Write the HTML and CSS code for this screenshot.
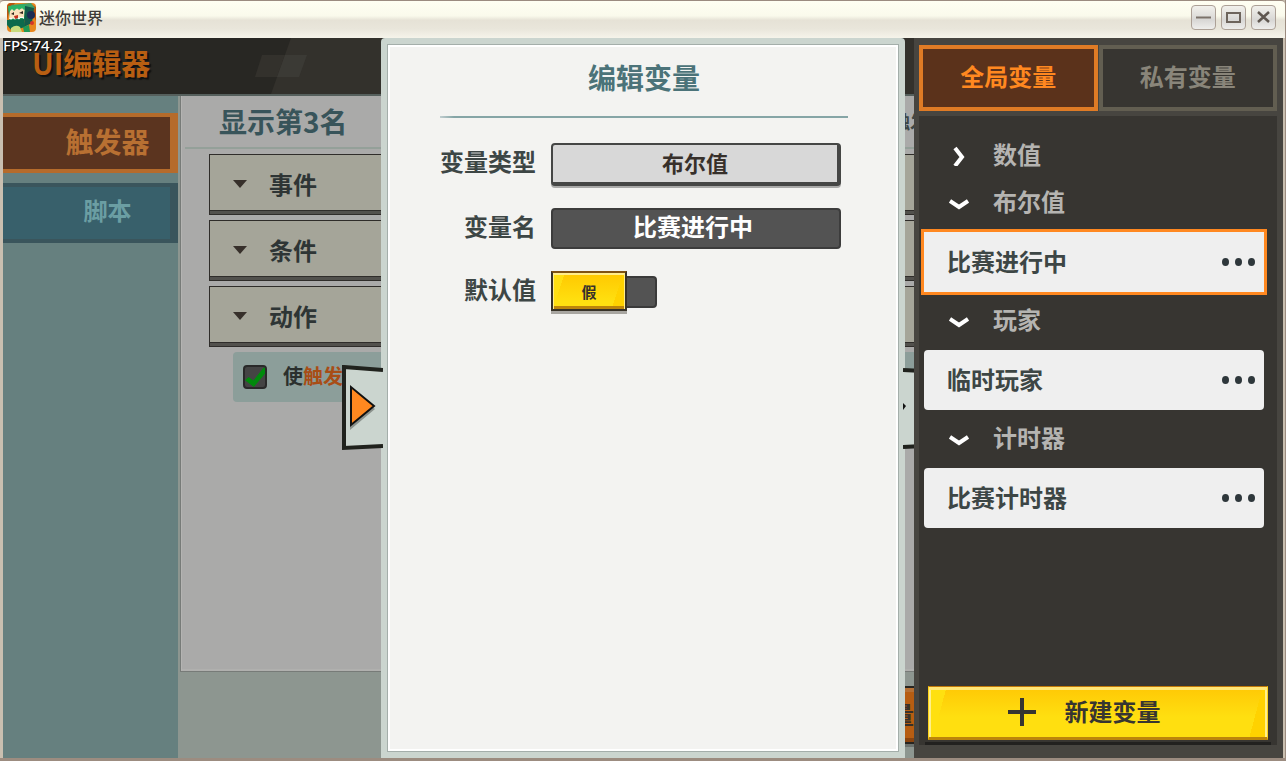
FILE: index.html
```html
<!DOCTYPE html>
<html lang="zh-CN">
<head>
    <meta charset="UTF-8">
    <meta name="viewport" content="width=device-width, initial-scale=1.0">
    <title>迷你世界</title>
    <link rel="stylesheet" href="styles.css">
</head>
<body>
    <div class="titlebar">
        <svg class="app-icon" width="29" height="29" viewBox="0 0 29 29">
            <rect width="29" height="29" rx="4" fill="#e8871e"/>
            <path d="M0 18V4q0-4 4-4h4L2 9zM21 0l8 4v14z" fill="#b9560f"/>
            <path d="M4 2L24 0L28 5L24 8L6 6z" fill="#3fa26b"/>
            <path d="M1 5L19 3L20 6V17L3 20z" fill="#1f9a55"/>
            <path d="M3 6L18 5L17 14L2 16z" fill="#fbe3bd"/>
            <path d="M1 3L18 2L19 6L17 7L15 5L12 7L10 5L7 8L5 6L2 9z" fill="#2bb566"/>
            <path d="M18 3L27 5L25 20L17 24z" fill="#145c4b"/>
            <path d="M2 15L4 17L6 15L8 17L10 15L12 17L14 14L17 16V14L3 15z" fill="#fff"/>
            <path d="M0 17L17 16L18 24L5 28L0 22z" fill="#0d6a4c"/>
            <path d="M4 11l3-2v3zM12 10l4-2v3z" fill="#33251c"/>
            <path d="M7 13l4-1v3l-3 1z" fill="#c5331f"/>
            <circle cx="24" cy="12" r="4" fill="#1d2c52"/>
            <circle cx="25" cy="20" r="2" fill="#d4352a"/>
            <path d="M4 25q5-4 9-1l2 5H4z" fill="#c9dc7d"/>
            <path d="M16 24l6-2 1 7h-6z" fill="#1f9a55"/>
        </svg>
        <span class="app-name">迷你世界</span>
        <div class="window-buttons">
            <button type="button" aria-label="最小化">
                <svg width="17" height="17" viewBox="0 0 17 17"><path d="M1 8.500H16" stroke="#7b726a" stroke-width="2"/></svg>
            </button>
            <button type="button" aria-label="最大化">
                <svg width="17" height="17" viewBox="0 0 17 17"><rect x="2" y="4" width="13" height="9" fill="none" stroke="#6d645c" stroke-width="2"/></svg>
            </button>
            <button type="button" aria-label="关闭">
                <svg width="17" height="17" viewBox="0 0 17 17"><path d="M3 3L14 13M14 3L3 13" stroke="#5f5750" stroke-width="2.500"/></svg>
            </button>
        </div>
    </div>

    <div class="client">
        <div class="fps">FPS:74.2</div>

        <div class="editor">
            <header class="editor-header">
                <svg class="pattern" width="1280" height="56" viewBox="0 0 1280 56">
                    <path d="M288 0H1280V56H268z" fill="#33312c"/>
                    <path d="M259 17H282L274 39H252z" fill="#33312c"/>
                    <path d="M282 17H304L296 39H274z" fill="#3b3a35"/>
                </svg>
                <h1>UI编辑器</h1>
            </header>
            <div class="editor-body">
                <nav class="sidebar">
                    <button type="button" class="side-tab active">触发器</button>
                    <button type="button" class="side-tab">脚本</button>
                </nav>
                <main class="workspace">
                    <section class="trigger">
                        <div class="trigger-head">
                            <h2>显示第3名</h2>
                            <span class="trigger-note">触发器</span>
                        </div>
                        <div class="sections">
                            <button type="button" class="section-bar"><i class="caret"></i>事件</button>
                            <button type="button" class="section-bar"><i class="caret"></i>条件</button>
                            <button type="button" class="section-bar"><i class="caret"></i>动作</button>
                            <label class="action-row">
                                <input type="checkbox" checked>
                                <span>使<em>触发器</em></span>
                            </label>
                        </div>
                    </section>
                    <div class="workspace-foot">
                        <button type="button" class="orange-button">变量</button>
                    </div>
                </main>
            </div>
        </div>

        <div class="dialog" role="dialog" aria-labelledby="dialog-title">
            <button type="button" class="handle handle-left" aria-label="收起">
                <svg width="41" height="86" viewBox="0 0 41 86">
                    <path d="M41 5L2 2V83L41 81" fill="#cbd5cf" stroke="#20221d" stroke-width="4"/>
                    <path d="M8 25L33 44L8 65z" fill="#8b928d"/>
                    <path d="M9 22V60L32 41z" fill="#ff8820" stroke="#111" stroke-width="2"/>
                </svg>
            </button>
            <button type="button" class="handle handle-right" aria-label="展开">
                <svg width="41" height="86" viewBox="0 0 41 86">
                    <path d="M0 5L39 7V80L0 82" fill="#cbd5cf" stroke="#20221d" stroke-width="4"/>
                    <path d="M0 38L3 41L0 45z" fill="#111"/>
                </svg>
            </button>
            <div class="dialog-page">
                <h2 id="dialog-title">编辑变量</h2>
                <form class="variable-form">
                    <label for="var-type">变量类型</label>
                    <select id="var-type">
                        <option>数值</option>
                        <option selected>布尔值</option>
                        <option>玩家</option>
                        <option>计时器</option>
                    </select>
                    <label for="var-name">变量名</label>
                    <input type="text" id="var-name" value="比赛进行中">
                    <label for="var-default">默认值</label>
                    <div class="toggle">
                        <input type="checkbox" id="var-default">
                        <span class="toggle-knob">假</span>
                    </div>
                </form>
            </div>
        </div>

        <aside class="variables">
            <div class="scope-tabs">
                <button type="button" class="scope-tab active">全局变量</button>
                <button type="button" class="scope-tab">私有变量</button>
            </div>
            <div class="variable-list">
                <button type="button" class="group">
                    <svg width="20" height="20" viewBox="0 0 20 20"><path d="M6 2L13 11L6 20" fill="none" stroke="#fff" stroke-width="4"/></svg>
                    <span>数值</span>
                </button>
                <button type="button" class="group">
                    <svg width="20" height="20" viewBox="0 0 20 20"><path d="M1 8L10 14L19 8" fill="none" stroke="#fff" stroke-width="4"/></svg>
                    <span>布尔值</span>
                </button>
                <div class="variable selected">
                    <span>比赛进行中</span>
                    <button type="button" class="more" aria-label="更多"><i></i><i></i><i></i></button>
                </div>
                <button type="button" class="group">
                    <svg width="20" height="20" viewBox="0 0 20 20"><path d="M1 8L10 14L19 8" fill="none" stroke="#fff" stroke-width="4"/></svg>
                    <span>玩家</span>
                </button>
                <div class="variable">
                    <span>临时玩家</span>
                    <button type="button" class="more" aria-label="更多"><i></i><i></i><i></i></button>
                </div>
                <button type="button" class="group">
                    <svg width="20" height="20" viewBox="0 0 20 20"><path d="M1 8L10 14L19 8" fill="none" stroke="#fff" stroke-width="4"/></svg>
                    <span>计时器</span>
                </button>
                <div class="variable">
                    <span>比赛计时器</span>
                    <button type="button" class="more" aria-label="更多"><i></i><i></i><i></i></button>
                </div>
                <div class="create">
                    <button type="button" class="create-button">
                        <svg width="28" height="28" viewBox="0 0 28 28"><path d="M14 0V28M0 14H28" stroke="#373531" stroke-width="4"/></svg>
                        <span>新建变量</span>
                    </button>
                </div>
            </div>
        </aside>
    </div>
</body>
</html>
```

FILE: styles.css
```css
* {
    box-sizing: border-box;
}
body {
    margin: 0;
    height: 100vh;
    display: flex;
    flex-direction: column;
    overflow: hidden;
    background: #c9bfb0;
    border-right: 1px solid #9c8c80;
    border-bottom: 3px solid #9c8c80;
    font-family: "Noto Sans CJK SC", sans-serif;
    font-size: 24px;
    font-weight: 700;
    color: #3d4645;
}
button, input, select {
    font: inherit;
    color: inherit;
    margin: 0;
    padding: 0;
    border: none;
    border-radius: 0;
    background: none;
}
button {
    cursor: pointer;
}
h1, h2 {
    margin: 0;
}
svg {
    display: block;
    flex: none;
}

/* window frame */
.titlebar {
    flex: none;
    height: 38px;
    display: flex;
    align-items: center;
    padding: 0 9px 4px 7px;
    border-top: 1px solid #9c8c80;
    border-radius: 4px 4px 0 0;
    background: linear-gradient(#fffff2 0, #fafaec 40%, #e6e2d6 52%, #e9e6db 75%, #f6f4ea);
}
.app-name {
    margin-left: 3px;
    padding-bottom: 2px;
    font-size: 16px;
    font-weight: 500;
    line-height: 24px;
    color: #3f3c38;
}
.window-buttons {
    display: flex;
    gap: 5px;
    margin-left: auto;
}
.window-buttons button {
    width: 25px;
    height: 25px;
    display: flex;
    align-items: center;
    justify-content: center;
    border: 1px solid #aca096;
    border-radius: 4px;
    background: linear-gradient(#f2f1ec, #d8d7d5 60%, #eeeeec);
}
.client {
    flex: 1;
    min-height: 0;
    position: relative;
    overflow: hidden;
    margin: 0 2px 0 3px;
}
.fps {
    position: absolute;
    top: 0;
    left: 0;
    z-index: 1;
    font-family: "Noto Sans", sans-serif;
    font-size: 15px;
    font-weight: 500;
    line-height: 14px;
    color: #fff;
    text-shadow: 1px 1px 0 #000;
}

/* editor behind the dialog */
.editor {
    height: 100%;
    display: flex;
    flex-direction: column;
}
.editor-header {
    flex: none;
    height: 58px;
    position: relative;
    padding-left: 29px;
    background: #282723;
    border-bottom: 2px solid #56605d;
}
.pattern {
    position: absolute;
    top: 0;
    left: 0;
}
.editor-header h1 {
    position: relative;
    font-size: 29px;
    line-height: 48px;
    color: #b85e12;
    text-shadow: 2px 2px 1px #111;
}
.editor-body {
    flex: 1;
    min-height: 0;
    display: flex;
}
.sidebar {
    flex: none;
    width: 175px;
    padding-top: 17px;
    background: #66807f;
    display: flex;
    flex-direction: column;
    gap: 10px;
}
.side-tab {
    height: 60px;
    padding: 0 0 8px 42px;
    border: 4px solid #3a555c;
    border-width: 4px 8px 4px 0;
    background: #38606b;
    color: #6b9ea3;
}
.side-tab.active {
    padding-bottom: 4px;
    border-color: #b56b2b;
    background: #5b341f;
    font-size: 28px;
    line-height: 40px;
    color: #b87032;
}
.workspace {
    flex: 1;
    min-width: 0;
    display: flex;
    flex-direction: column;
    padding-left: 2px;
    background: #8d9690;
}
.trigger {
    flex: 1;
    border: 1px solid #777b78;
    border-top: none;
    background: #aaaaa9;
    box-shadow: inset 1px 0 0 #b4b4b2, inset 0 -2px 0 #b0b0ae;
}
.trigger-head {
    height: 53px;
    display: flex;
    align-items: center;
    justify-content: space-between;
    margin-left: 4px;
    padding: 0 336px 2px 34px;
    border-bottom: 2px solid #94a099;
}
.trigger-head h2 {
    font-size: 28px;
    line-height: 44px;
    color: #38545a;
}
.trigger-note {
    font-size: 18px;
}
.sections {
    padding: 5px 0 0 28px;
    display: flex;
    flex-direction: column;
    gap: 5px;
}
.section-bar {
    height: 61px;
    display: flex;
    align-items: center;
    gap: 22px;
    padding: 0 0 2px 23px;
    border: 1px solid #2f2d2a;
    box-shadow: inset 0 -3px 0 #52514d, inset 0 -4px 0 #2f2d2a;
    background: #a5a599;
    color: #2e3535;
}
.caret {
    border: 7px solid transparent;
    border-top: 8px solid #37302b;
    border-bottom: none;
}
.action-row {
    height: 50px;
    display: flex;
    align-items: center;
    gap: 16px;
    margin-left: 24px;
    padding-left: 10px;
    border-radius: 4px;
    background: #8c9e9a;
    font-size: 20px;
    color: #2b302e;
}
.action-row span {
    padding-bottom: 4px;
}
.action-row em {
    font-style: normal;
    color: #a84d16;
}
.action-row input {
    appearance: none;
    width: 24px;
    height: 24px;
    position: relative;
    border: 2px solid #292929;
    border-radius: 4px;
    background: #444;
}
.action-row input:checked::before {
    content: "";
    position: absolute;
    inset: 0;
    background: #008a0c;
    clip-path: polygon(0 66%, 18% 50%, 42% 68%, 92% 4%, 100% 4%, 100% 34%, 44% 100%);
}
.workspace-foot {
    height: 86px;
    flex: none;
    display: flex;
    justify-content: flex-end;
    padding: 14px 340px 0 0;
}
.orange-button {
    width: 140px;
    height: 58px;
    padding: 0 29px 4px 0;
    border: 2px solid #272521;
    border-width: 2px 0;
    background: linear-gradient(#b57035 0 4px, #b65d12 4px 50px, #8a4510 50px);
    box-shadow: 0 3px 0 #6c726e;
    text-align: right;
    color: #37302b;
}

/* edit dialog */
.dialog {
    position: absolute;
    top: 0;
    bottom: 0;
    left: 50%;
    width: 524px;
    margin-left: -262px;
    padding: 7px;
    border-radius: 4px 4px 0 0;
    background: #cbd5cf;
}
.handle {
    position: absolute;
    top: 327px;
}
.handle-left {
    left: -39px;
}
.handle-right {
    right: -39px;
}
.dialog-page {
    position: relative;
    height: 100%;
    padding: 0 48px 0 50px;
    border: 2px solid #fff;
    outline: 1px solid #a4aeaa;
    background: #f3f3f1;
}
.dialog-page h2 {
    padding: 0 0 9px;
    border-bottom: 2px solid;
    border-image: linear-gradient(90deg, #c5d0d2, #85a5a6 15px) 1;
    font-size: 28px;
    line-height: 60px;
    text-align: center;
    color: #4b7379;
}
.variable-form {
    display: grid;
    grid-template-columns: 96px 290px;
    gap: 22px 15px;
    padding-top: 25px;
}
.variable-form label {
    line-height: 36px;
    text-align: right;
}
.variable-form select {
    appearance: none;
    height: 43px;
    padding-bottom: 3px;
    border: 2px solid #454645;
    border-width: 2px 4px 4px 2px;
    border-radius: 4px;
    background: #d8d8d8;
    box-shadow: 0 2px 0 #a9a9a8;
    font-size: 22px;
    text-align: center;
    text-align-last: center;
    color: #37302b;
}
.variable-form input[type="text"] {
    width: 100%;
    height: 41px;
    padding: 0 6px 6px 0;
    border: 2px solid #3c3c3c;
    border-radius: 4px;
    background: #535353;
    text-align: center;
    color: #fff;
}
.toggle {
    position: relative;
    width: 106px;
    height: 42px;
    display: flex;
    align-items: center;
}
.toggle input {
    appearance: none;
    width: 100%;
    height: 32px;
    border: 2px solid #3a3a3a;
    border-radius: 4px;
    background: #535353;
}
.toggle-knob {
    position: absolute;
    top: 0;
    left: 0;
    width: 76px;
    height: 40px;
    border: 2px solid #373227;
    border-top-color: #805211;
    background: linear-gradient(#bc850b, #bc850b) bottom / 100% 3px no-repeat, linear-gradient(108deg, #ffdf12 0 14%, transparent 14% 84%, #ffd200 84%), linear-gradient(#ffc800, #ffe010 80%);
    box-shadow: inset 1px 2px 0 #ffed8b, inset -1px 0 0 #ffed8b, 0 3px 0 #a8a6a1;
    font-size: 15px;
    line-height: 38px;
    text-align: center;
    color: #37302b;
    pointer-events: none;
}

/* variables panel */
.variables {
    position: absolute;
    top: 0;
    right: 0;
    bottom: 0;
    width: 369px;
    display: flex;
    flex-direction: column;
    gap: 5px;
    padding: 7px 6px 13px 5px;
    background: #474540;
}
.scope-tabs {
    display: flex;
    gap: 1px;
}
.scope-tab {
    flex: 1;
    height: 66px;
    padding-bottom: 6px;
    border: 4px solid #625e51;
    background: #373531;
    color: #89857a;
}
.scope-tab.active {
    border-color: #e07b25;
    background: #5b321b;
    color: #ff8820;
}
.variable-list {
    flex: 1;
    display: flex;
    flex-direction: column;
    padding: 16px 13px 0 5px;
    background: #373531;
}
.group {
    height: 47px;
    display: flex;
    align-items: center;
    gap: 24px;
    padding-left: 25px;
    color: #b5b4b1;
}
.group span, .variable span, .create-button span {
    padding-bottom: 4px;
}
.variable {
    height: 60px;
    display: flex;
    align-items: center;
    justify-content: space-between;
    margin: 6px 0 5px;
    padding: 0 9px 0 23px;
    border-radius: 4px;
    background: #efefef;
}
.variable.selected {
    border-radius: 0;
    outline: 3px solid #ff8820;
    box-shadow: 0 1px 0 #232b30;
}
.more {
    display: flex;
    gap: 6px;
}
.more i {
    width: 7px;
    height: 8px;
    border-radius: 50%;
    background: #2e373b;
}
.create {
    margin: auto -7px 0 1px;
    padding: 0 3px 2px;
    border-bottom: 3px solid #22211f;
}
.create-button {
    width: 100%;
    height: 54px;
    display: flex;
    align-items: center;
    justify-content: center;
    gap: 29px;
    padding-right: 28px;
    border: 1px solid #ffd318;
    border-top-color: #c17908;
    border-bottom: 3px solid #bc850b;
    background: linear-gradient(105deg, #ffe010 0 5%, transparent 5% 95%, #ffd200 95%), linear-gradient(#ffc805, #ffdf10 60%);
    box-shadow: inset 0 3px 0 #ffe778, inset 2px 0 0 #fff08a, inset -2px 0 0 #fff08a;
    color: #373531;
}
```
